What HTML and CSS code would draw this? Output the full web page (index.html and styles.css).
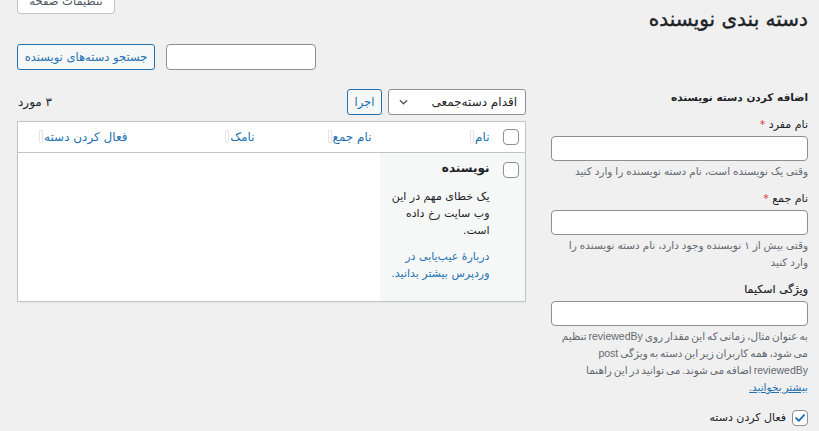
FILE: index.html
```html
<!DOCTYPE html>
<html lang="fa" dir="rtl">
<head>
<meta charset="utf-8">
<title>دسته بندی نویسنده</title>
<link rel="stylesheet" href="styles.css">
</head>
<body>
<div class="wrap">
  <div class="head">
    <h1 class="title">دسته بندی نویسنده</h1>
    <button class="screen-opts">تنظیمات صفحه</button>
  </div>
  <div class="search-row">
    <input class="search-input" type="text">
    <button class="btn">جستجو دسته‌های نویسنده</button>
  </div>
  <div class="cols">
    <div class="col-form">
      <h2 class="form-title">اضافه کردن دسته نویسنده</h2>
      <div class="field">
        <label class="lbl">نام مفرد <span class="req">*</span></label>
        <input class="inp" type="text">
        <p class="desc">وقتی یک نویسنده است، نام دسته نویسنده را وارد کنید</p>
      </div>
      <div class="field">
        <label class="lbl">نام جمع <span class="req">*</span></label>
        <input class="inp" type="text">
        <p class="desc">وقتی بیش از ۱ نویسنده وجود دارد، نام دسته نویسنده را وارد کنید</p>
      </div>
      <div class="field">
        <label class="lbl lbl-b">ویژگی اسکیما</label>
        <input class="inp" type="text">
        <p class="desc desc-tight">به عنوان مثال، زمانی که این مقدار روی reviewedBy تنظیم می شود، همه کاربران زیر این دسته به ویژگی post reviewedBy اضافه می شوند. می توانید در این راهنما <a class="link-u" href="#">بیشتر بخوانید.</a></p>
      </div>
      <div class="check-row">
        <span class="cb cb-on"><svg viewBox="0 0 16 16" width="14" height="14"><path d="M3.5 8.2 6.6 11.2 12.6 4.6" fill="none" stroke="#2271b1" stroke-width="2.2" stroke-linecap="round" stroke-linejoin="round"/></svg></span>
        <span class="check-lbl">فعال کردن دسته</span>
      </div>
    </div>
    <div class="col-list">
      <div class="tablenav">
        <div class="bulk">
          <div class="select">
            <span>اقدام دسته‌جمعی</span>
            <svg class="chev" viewBox="0 0 10 6" width="9" height="6"><path d="M1 1l4 4 4-4" fill="none" stroke="#50575e" stroke-width="1.4"/></svg>
          </div>
          <button class="btn btn-sm">اجرا</button>
        </div>
        <span class="count">۳ مورد</span>
      </div>
      <table class="list">
        <colgroup>
          <col class="c-check"><col class="c-name"><col class="c-plural"><col class="c-slug"><col>
        </colgroup>
        <thead>
          <tr>
            <th class="th-check"><span class="cb"></span></th>
            <th><span class="th-in"><a href="#">نام</a><span class="sort-ind"></span></span></th>
            <th><span class="th-in"><a href="#">نام جمع</a><span class="sort-ind"></span></span></th>
            <th><span class="th-in"><a href="#">نامک</a><span class="sort-ind"></span></span></th>
            <th><span class="th-in"><a href="#">فعال کردن دسته</a><span class="sort-ind"></span></span></th>
          </tr>
        </thead>
        <tbody>
          <tr>
            <td class="td-check shade"><span class="cb"></span></td>
            <td class="td-name shade">
              <strong class="row-title">نویسنده</strong>
              <p class="err">یک خطای مهم در این وب سایت رخ داده است.</p>
              <p class="err"><a href="#">دربارهٔ عیب‌یابی در وردپرس بیشتر بدانید.</a></p>
            </td>
            <td></td>
            <td></td>
            <td></td>
          </tr>
        </tbody>
      </table>
    </div>
  </div>
</div>
</body>
</html>
```

FILE: styles.css
```css
html { direction: rtl; }
body {
  margin: 0;
  background: #f0f0f1;
  font-family: "DejaVu Sans", sans-serif;
  font-size: 11px;
  color: #1d2327;
  line-height: 1.4;
}
a { color: #2271b1; text-decoration: none; }
.wrap { padding: 0 11px 0 17px; }
.head { display: flex; justify-content: space-between; align-items: flex-start; }
.title { margin: 0; padding-top: 4px; font-size: 20px; font-weight: 400; line-height: 30px; color: #1d2327; -webkit-text-stroke: 0.4px #1d2327; }
.screen-opts {
  margin-top: -12px;
  width: 98px; height: 26px;
  background: #fff; border: 1px solid #c3c4c7; border-top: 0;
  border-radius: 0 0 4px 4px;
  font: 11.5px/26px "DejaVu Sans", sans-serif; color: #50575e;
  padding: 0;
}
.search-row { display: flex; justify-content: flex-end; gap: 11px; margin-top: 10px; }
.search-input {
  width: 150px; height: 26px; box-sizing: border-box;
  border: 1px solid #8c8f94; border-radius: 4px; background: #fff;
}
.btn {
  height: 26px; box-sizing: border-box; padding: 0;
  border: 1px solid #2271b1; border-radius: 3px; background: #f6f7f7;
  color: #2271b1; font: 11.5px/24px "DejaVu Sans", sans-serif;
  white-space: nowrap;
  width: 138px;
}
.btn-sm { width: 35px; }
.cols { display: grid; grid-template-columns: 257px 1fr; gap: 25px; margin-top: 15px; }

/* form column */
.form-title { margin: 2px 0 0; font-size: 10.5px; font-weight: 700; line-height: 20px; }
.field { margin-top: 9px; }
.field + .field { margin-top: 10px; }
.lbl { display: block; line-height: 18px; }
.lbl-b { -webkit-text-stroke: 0.2px #1d2327; }
.req { color: #d63638; }
.inp {
  display: block; width: 100%; height: 25px; box-sizing: border-box; margin-top: 2px;
  border: 1px solid #8c8f94; border-radius: 4px; background: #fff;
}
.desc {
  margin: 2px 0 0; color: #646970; line-height: 17px;
  font-family: "Liberation Sans", "DejaVu Sans", sans-serif;
  font-size: 10.5px;
}
.desc-tight { word-spacing: -1px; }
.link-u { text-decoration: underline; white-space: nowrap; }
.check-row { display: flex; align-items: center; gap: 6px; margin-top: 13px; height: 18px; }
.cb {
  display: inline-flex; align-items: center; justify-content: center;
  width: 16px; height: 16px; box-sizing: border-box;
  border: 1px solid #8c8f94; border-radius: 4px; background: #fff;
  vertical-align: middle;
}
.check-lbl { line-height: 18px; }

/* list column */
.tablenav { display: flex; justify-content: space-between; align-items: center; padding-top: 4px; height: 26px; }
.bulk { display: flex; gap: 6px; }
.select {
  width: 138px; height: 26px; box-sizing: border-box;
  border: 1px solid #8c8f94; border-radius: 3px; background: #fff;
  display: flex; align-items: center; justify-content: space-between;
  padding: 0 8px 0 10px; font-size: 12px;
}
.chev { display: block; }
.count { padding-left: 1px; font-size: 12px; }
.list {
  width: 100%; margin-top: 6px;
  border: 1px solid #c3c4c7; border-collapse: collapse;
  table-layout: fixed; background: #fff;
  box-shadow: 0 1px 1px rgba(0,0,0,.04);
}
.c-check { width: 28px; }
.c-name { width: 118px; }
.c-plural { width: 117px; }
.c-slug { width: 127px; }
thead th {
  height: 30px; padding: 0 8px; text-align: right; font-weight: 400; font-size: 12px;
  border-bottom: 1px solid #c3c4c7; vertical-align: middle;
}
.th-check { padding: 0; text-align: center; }
.th-in { display: inline-flex; align-items: center; gap: 1px; }
.sort-ind { width: 2px; height: 11px; border: 1px solid #e4e4e6; border-radius: 1px; }
tbody td { vertical-align: top; padding: 6px 8px 19px; }
.shade { background: #f6f7f7; }
.td-check { padding: 9px 0 0; text-align: center; }
.row-title { display: block; line-height: 19px; font-weight: 700; font-size: 12px; }
.err { margin: 10px 0 0; line-height: 17px; }
.err + .err { margin-top: 9px; }
```
